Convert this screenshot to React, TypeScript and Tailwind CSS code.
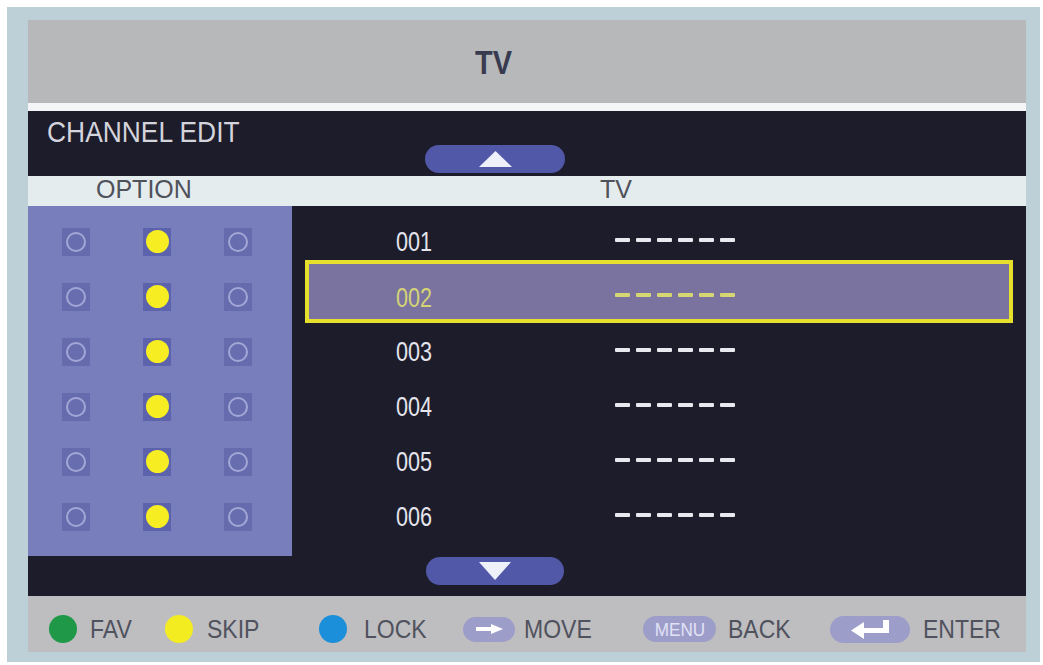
import React from "react";

const font = { fontFamily: '"Liberation Sans", Arial, sans-serif' };

function RingIcon() {
  return (
    <div className="w-[28px] h-[28px] bg-[#666bae] flex items-center justify-center">
      <div className="w-[20px] h-[20px] rounded-full border-[2px] border-[#a3a7d6] bg-[#686db0]" />
    </div>
  );
}

function YellowIcon() {
  return (
    <div className="w-[28px] h-[28px] bg-[#5c62ac] flex items-center justify-center">
      <div className="w-[23px] h-[23px] rounded-full bg-[#f6ee22]" />
    </div>
  );
}

function Dashes({ color }: { color: string }) {
  return (
    <div className="flex gap-[6px]">
      {[0, 1, 2, 3, 4, 5].map((i) => (
        <div key={i} className="w-[15px] h-[4px] rounded-[1px]" style={{ backgroundColor: color }} />
      ))}
    </div>
  );
}

function UpPill() {
  return (
    <div className="w-[140px] h-[28px] rounded-full bg-[#5258a8] flex items-center justify-center">
      <svg width="33" height="16" viewBox="0 0 33 16">
        <polygon points="16.5,0 33,16 0,16" fill="#eef0fa" />
      </svg>
    </div>
  );
}

function DownPill() {
  return (
    <div className="w-[138px] h-[28px] rounded-full bg-[#5258a8] flex items-center justify-center">
      <svg width="32" height="18" viewBox="0 0 32 18">
        <polygon points="0,0 32,0 16,18" fill="#eef0fa" />
      </svg>
    </div>
  );
}

function Label({ children }: { children: React.ReactNode }) {
  return <span className="inline-block origin-left scale-x-[0.92] whitespace-nowrap">{children}</span>;
}

export default function App() {
  const channels = ["001", "002", "003", "004", "005", "006"];
  return (
    <div className="w-[1043px] h-[665px] bg-white overflow-hidden" style={font}>
      <div className="ml-[7px] mt-[7px] w-[1033px] h-[655px] bg-[#bdd0d8] pl-[21px] pr-[14px] pt-[13px]">
        <div className="w-[998px] flex flex-col">
          {/* Title */}
          <div className="h-[83px] bg-[#b7b8ba] flex items-center pl-[447px]">
            <span className="inline-block origin-left scale-x-[0.85] text-[34px] font-bold text-[#383b4f] leading-none">TV</span>
          </div>
          <div className="h-[8px] bg-[#f3f5f7]" />
          {/* Channel edit band */}
          <div className="h-[65px] bg-[#1d1c2a] flex">
            <div className="w-[397px] pl-[19px] pt-[5px]">
              <span className="inline-block origin-left scale-x-[0.88] whitespace-nowrap text-[30px] leading-[32px] text-[#d4d4dc]">CHANNEL EDIT</span>
            </div>
            <div className="self-end mb-[3px]">
              <UpPill />
            </div>
          </div>
          {/* Header row */}
          <div className="h-[30px] bg-[#e4ecee] flex items-center">
            <div className="w-[264px] pl-[68px]">
              <span className="text-[25px] leading-none text-[#4f515b]">OPTION</span>
            </div>
            <div className="pl-[308px]">
              <span className="text-[25px] leading-none text-[#4f515b]">TV</span>
            </div>
          </div>
          {/* Content */}
          <div className="h-[390px] bg-[#1d1c2a] flex">
            <div className="w-[264px] flex flex-col">
              <div className="h-[350px] bg-[#787dbc] pt-[8px] flex flex-col">
                {channels.map((c) => (
                  <div key={c} className="h-[55px] flex items-center pl-[34px] gap-[53px]">
                    <RingIcon />
                    <YellowIcon />
                    <RingIcon />
                  </div>
                ))}
              </div>
            </div>
            <div className="flex-1 flex flex-col pt-[8px]">
              {channels.map((c, i) =>
                i === 1 ? (
                  <div
                    key={c}
                    className="ml-[13px] w-[708px] h-[63px] -mt-[9px] mb-[1px] border-[4px] border-[#e6e02c] bg-[#7b739f] flex items-center pt-[11px] pl-[87px]"
                  >
                    <div className="w-[219px] pt-[5px]">
                      <span className="inline-block origin-left scale-x-[0.8] text-[27px] text-[#d4d476] leading-none">{c}</span>
                    </div>
                    <div className="-mt-[4px]">
                      <Dashes color="#d6d672" />
                    </div>
                  </div>
                ) : (
                  <div key={c} className="h-[55px] flex items-center pl-[104px]">
                    <div className="w-[219px] pt-[4px]">
                      <span className="inline-block origin-left scale-x-[0.8] text-[27px] text-[#e4e4ec] leading-none">{c}</span>
                    </div>
                    <div className="-mt-[4px]">
                      <Dashes color="#e8e8ee" />
                    </div>
                  </div>
                )
              )}
              <div className="mt-[13px] ml-[134px]">
                <DownPill />
              </div>
            </div>
          </div>
          {/* Footer */}
          <div className="h-[56px] bg-[#bebec0] flex items-center pt-[10px] pl-[21px] text-[25px] leading-none text-[#50525e]">
            <div className="w-[28px] h-[28px] rounded-full bg-[#1f9848] shrink-0" />
            <span className="ml-[13px] w-[75px]"><Label>FAV</Label></span>
            <div className="w-[28px] h-[28px] rounded-full bg-[#f3ec20] shrink-0" />
            <span className="ml-[14px] w-[112px]"><Label>SKIP</Label></span>
            <div className="w-[28px] h-[28px] rounded-full bg-[#1b8fd9] shrink-0" />
            <span className="ml-[17px] w-[99px]"><Label>LOCK</Label></span>
            <div className="w-[52px] h-[25px] rounded-full bg-[#9d9dca] flex items-center justify-center shrink-0">
              <svg width="27" height="10" viewBox="0 0 27 10">
                <rect x="0" y="3" width="17" height="4" fill="#ffffff" />
                <polygon points="15,0 27,5 15,10" fill="#ffffff" />
              </svg>
            </div>
            <span className="ml-[9px] w-[119px]"><Label>MOVE</Label></span>
            <div className="w-[73px] h-[26px] rounded-full bg-[#9d9dca] flex items-center justify-center shrink-0">
              <span className="inline-block scale-x-[0.9] text-[19px] text-[#e2e2f6]">MENU</span>
            </div>
            <span className="ml-[12px] w-[102px]"><Label>BACK</Label></span>
            <div className="w-[80px] h-[27px] rounded-full bg-[#9d9dca] flex items-center justify-center shrink-0">
              <svg width="38" height="20" viewBox="0 0 38 20">
                <rect x="10" y="9" width="28" height="5" fill="#ffffff" />
                <rect x="32" y="1" width="6" height="13" fill="#ffffff" />
                <polygon points="0,11.5 13,3 13,20" fill="#ffffff" />
              </svg>
            </div>
            <span className="ml-[13px]"><Label>ENTER</Label></span>
          </div>
        </div>
      </div>
    </div>
  );
}
